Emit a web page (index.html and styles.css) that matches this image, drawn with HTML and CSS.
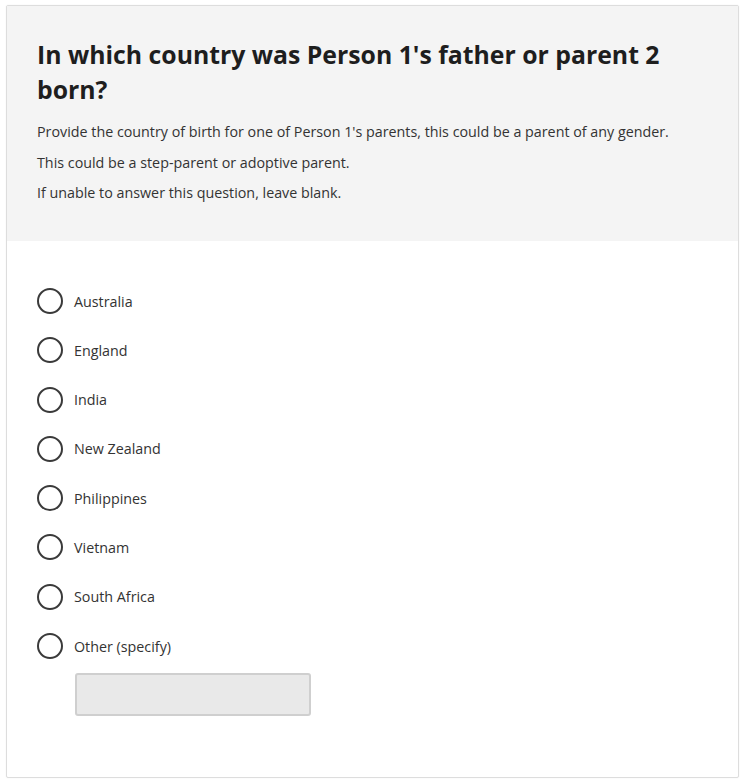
FILE: index.html
```html
<!DOCTYPE html>
<html lang="en">
<head>
<meta charset="utf-8">
<link rel="stylesheet" href="styles.css">
</head>
<body>
<div class="card">
  <div class="header">
    <h1 class="title">In which country was Person 1's father or parent 2 born?</h1>
    <p class="desc">Provide the country of birth for one of Person 1's parents, this could be a parent of any gender.</p>
    <p class="desc">This could be a step-parent or adoptive parent.</p>
    <p class="desc">If unable to answer this question, leave blank.</p>
  </div>
  <div class="body">
    <div class="options">
      <label class="option"><span class="radio"></span><span class="label">Australia</span></label>
      <label class="option"><span class="radio"></span><span class="label">England</span></label>
      <label class="option"><span class="radio"></span><span class="label">India</span></label>
      <label class="option"><span class="radio"></span><span class="label">New Zealand</span></label>
      <label class="option"><span class="radio"></span><span class="label">Philippines</span></label>
      <label class="option"><span class="radio"></span><span class="label">Vietnam</span></label>
      <label class="option"><span class="radio"></span><span class="label">South Africa</span></label>
      <label class="option"><span class="radio"></span><span class="label">Other (specify)</span></label>
    </div>
    <div class="other-input"></div>
  </div>
</div>
</body>
</html>
```
FILE: styles.css
```css
html, body {
  margin: 0;
  padding: 0;
  background: #ffffff;
}
body {
  font-family: "Open Sans", "Noto Sans", sans-serif;
  color: #333333;
  padding: 5px 6px 6px 6px;
}
.card {
  border: 1px solid #dddddd;
  border-radius: 2px;
  height: 773px;
  box-sizing: border-box;
  background: #ffffff;
  box-shadow: 0 0 2px rgba(0, 0, 0, 0.06);
}
.header {
  background: #f4f4f4;
  height: 235px;
  box-sizing: border-box;
  padding: 31px 30px 0 30px;
}
.title {
  margin: 0;
  font-size: 24.8px;
  font-weight: 700;
  line-height: 35px;
  color: #1e1e1e;
  width: 660px;
}
.desc {
  margin: 0;
  font-size: 14.3px;
  line-height: 30.6px;
  color: #333333;
}
.title + .desc {
  margin-top: 10px;
}
.body {
  padding: 47px 30px 0 30px;
  display: flex;
  flex-direction: column;
}
.options {
  display: flex;
  flex-direction: column;
  gap: 23.3px;
}
.option {
  display: flex;
  align-items: center;
  height: 26px;
}
.radio {
  width: 26px;
  height: 26px;
  box-sizing: border-box;
  border: 2px solid #3a3a3a;
  border-radius: 50%;
  flex: none;
}
.label {
  margin-left: 11px;
  font-size: 14.3px;
  color: #333333;
}
.other-input {
  margin-left: 38px;
  margin-top: 14px;
  width: 236px;
  height: 43px;
  box-sizing: border-box;
  background: #e9e9e9;
  border: 2px solid #cfcfcf;
  border-radius: 3px;
}
```
